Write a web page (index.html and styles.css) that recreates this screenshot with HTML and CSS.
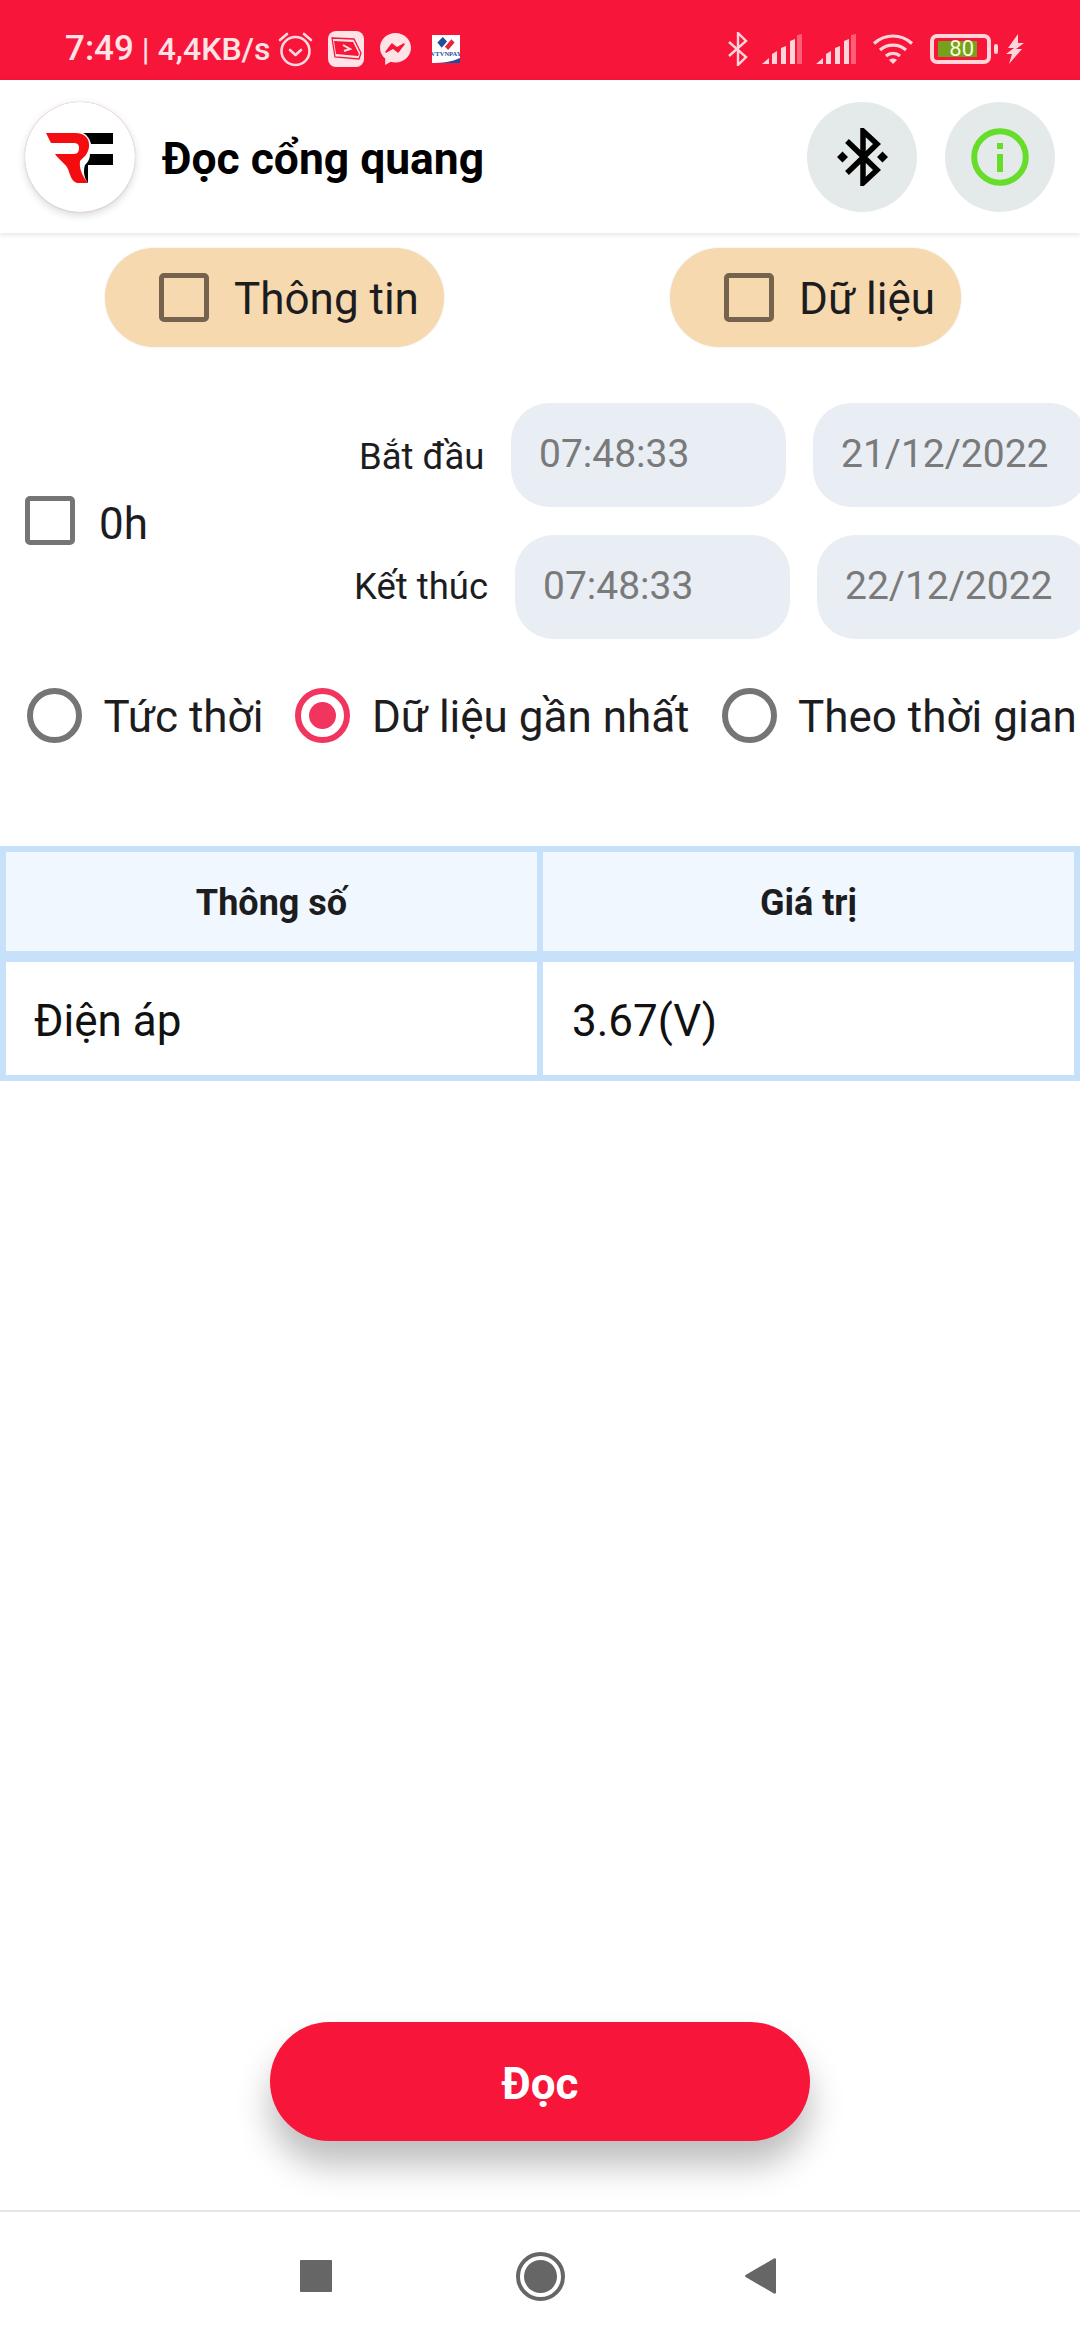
FILE: index.html
```html
<!DOCTYPE html>
<html lang="vi">
<head>
<meta charset="utf-8">
<title>Đọc cổng quang</title>
<link rel="stylesheet" href="styles.css">
</head>
<body>
<div class="page">
  <header class="status">
    <span class="status-text"><span class="status-time">7:49</span> <span class="status-sep">|</span> 4,4KB/s</span>
    <svg class="ic-alarm" width="35" height="36" viewBox="0 0 35 36" fill="none" stroke="#FFD9DE" stroke-width="2.6" stroke-linecap="round" stroke-linejoin="round"><circle cx="17.5" cy="20" r="14"/><path d="M12 19l5.5 5 5.5-5"/><path d="M2 9l7-6M33 9l-7-6"/></svg>
    <svg class="ic-app" width="36" height="36" viewBox="0 0 36 36"><rect width="36" height="36" rx="8" fill="#FFE3E6"/><path d="M4 7l22 1 7 14-2 6-24-2z" fill="none" stroke="#F71539" stroke-width="1.3"/><path d="M6 10l19 1 6 12-1 2-22-2z" fill="#F71539"/><path d="M15 14l7 4-6 2" fill="none" stroke="#FFE3E6" stroke-width="2"/></svg>
    <svg class="ic-msg" width="31" height="32" viewBox="0 0 31 32"><path d="M15.500 0C6.900 0 0 6.500 0 14.700c0 4.400 2 8.200 5.200 10.900V32l5.500-3.200c1.500.4 3.100.6 4.800.6 8.600 0 15.500-6.500 15.500-14.700S24.100 0 15.500 0z" fill="#FFE3E6"/><path d="M6 19l6-8 5 4 7-4-6 8-5-4z" fill="#F71539" stroke="#F71539" stroke-width="1.500" stroke-linejoin="round"/></svg>
    <span class="ic-pay">
      <svg class="pay-mark" width="20" height="14" viewBox="0 0 18 13"><path d="M1 6l5-5 4 4-5 6z" fill="#1E4E9C"/><path d="M8 10l6-7 3 3-6 7z" fill="#E0283A"/></svg>
      <span class="pay-name">VTVNPAY</span>
      <svg class="pay-wave" width="28" height="5" viewBox="0 0 28 5"><path d="M0 5c10 0 20-1 28-5v5z" fill="#1E4E9C"/></svg>
    </span>
    <div class="status-right">
      <svg class="ic-bt" width="20" height="34" viewBox="0 0 20 34" fill="none" stroke="#FFD5DB" stroke-width="2.400"><path d="M1 10l17 15-8 8V1l8 8L1 24"/></svg>
      <svg class="ic-sig" width="40" height="30" viewBox="0 0 40 30"><path d="M0 30l7-6v6zM10 20l5-3v13h-5zM19 14l5-2v18h-5zM28 7l5-2v25h-5z" fill="#FFD5DB"/><path d="M35 1l5-1v30h-5z" fill="#FF5F76"/></svg>
      <svg class="ic-sig ic-sig2" width="40" height="30" viewBox="0 0 40 30"><path d="M0 30l7-6v6zM10 20l5-3v13h-5zM19 14l5-2v18h-5zM28 7l5-2v25h-5z" fill="#FFD5DB"/><path d="M35 1l5-1v30h-5z" fill="#FF5F76"/></svg>
      <svg class="ic-wifi" width="42" height="30" viewBox="0 0 42 30" fill="none" stroke="#FFD5DB" stroke-width="3.200"><path d="M2 9.500c11-10 27-10 38 0"/><path d="M8 16c7.500-6.500 18.500-6.500 26 0"/><path d="M14 22c4-3.500 10-3.500 14 0"/><path d="M21 30l-4-4c2-2 6-2 8 0z" fill="#FFD5DB" stroke="none"/></svg>
      <span class="battery"><span class="battery-fill">80</span></span>
      <span class="battery-nub"></span>
      <svg class="ic-bolt" width="18" height="30" viewBox="0 0 18 30"><path d="M12 0L2 14h6l-8 6h6l-3 10 13-15h-6l8-6h-6z" fill="#FFD5DB"/></svg>
    </div>
  </header>

  <section class="appbar">
    <div class="logo">
      <svg width="110" height="110" viewBox="0 0 110 110">
        <path d="M58 31H88V42H66C65 37 62 33 58 31Z" fill="#000"/>
        <path d="M65 52H88V63H63V81C59 76 58 69 60 63C63 60 65 57 65 52Z" fill="#000"/>
        <path d="M21 31H50C60 31 65 37 64 45C63 52 59 55 55 59C54 66 57 74 63 81H52C46 79 45 72 43 67C41 62 35 59 30 52H49C53 52 54 49 54 46C54 42 52 41 48 41H26Z" fill="#F40C10"/>
      </svg>
    </div>
    <h1 class="title">Đọc cổng quang</h1>
    <div class="round-btn round-btn-first">
      <svg width="51" height="58" viewBox="0 0 51 58" fill="none"><path d="M10 13L40 42L26 55V3L40 16L10 45" stroke="#000" stroke-width="5.500"/><path d="M5.500 23.500L11 29L5.500 34.500L0 29zM45.500 23.500L51 29L45.500 34.500L40 29z" fill="#000"/></svg>
    </div>
    <div class="round-btn">
      <svg width="58" height="58" viewBox="0 0 58 58" fill="none"><circle cx="29" cy="29" r="25.800" stroke="#66DD2B" stroke-width="6"/><path d="M26 15h6v6h-6zM26 26h6v18h-6z" fill="#66DD2B"/></svg>
    </div>
  </section>

  <section class="chips">
    <div class="chip chip-info"><span class="box box-chip"></span><span class="label">Thông tin</span></div>
    <div class="chip chip-data"><span class="box box-chip"></span><span class="label">Dữ liệu</span></div>
  </section>

  <section class="dates">
    <div class="zero"><span class="box"></span><span class="label">0h</span></div>
    <div class="date-rows">
      <div class="date-row date-row-start">
        <span class="date-label">Bắt đầu</span>
        <span class="field">07:48:33</span>
        <span class="field">21/12/2022</span>
      </div>
      <div class="date-row date-row-end">
        <span class="date-label">Kết thúc</span>
        <span class="field">07:48:33</span>
        <span class="field">22/12/2022</span>
      </div>
    </div>
  </section>

  <section class="radios">
    <div class="radio-item"><span class="radio"></span><span class="label">Tức thời</span></div>
    <div class="radio-item"><span class="radio radio-on"></span><span class="label">Dữ liệu gần nhất</span></div>
    <div class="radio-item"><span class="radio"></span><span class="label">Theo thời gian</span></div>
  </section>

  <section class="table">
    <div class="cell cell-head">Thông số</div>
    <div class="cell cell-head">Giá trị</div>
    <div class="cell">Điện áp</div>
    <div class="cell">3.67(V)</div>
  </section>

  <main class="action"><button class="read-btn">Đọc</button></main>

  <footer class="nav">
    <span class="nav-square"></span>
    <span class="nav-home"><span class="nav-home-dot"></span></span>
    <svg class="nav-back" width="31" height="36" viewBox="0 0 31 36"><path d="M29 .500c1.200-.6 2 0 2 1.500v32c0 1.500-.8 2.100-2 1.500L1 19.200c-1.300-.7-1.300-1.700 0-2.400z" fill="#666"/></svg>
  </footer>
</div>
</body>
</html>
```
FILE: styles.css
```css
* { box-sizing: border-box; }
html, body { margin: 0; padding: 0; }
body { font-family: Roboto, "Noto Sans", sans-serif; background: #fff; color: #1d1d1f; }
.page { width: 1080px; height: 2340px; overflow: hidden; display: flex; flex-direction: column; background: #fff; }

/* status bar */
.status { height: 80px; flex: none; background: #F71539; display: flex; align-items: center; padding: 18px 0 0 65px; color: #FFE3E6; }
.status svg { display: block; flex: none; }
.status-text { font-size: 32px; font-weight: 500; white-space: nowrap; line-height: 36px; width: 205px; }
.status-time { font-size: 35px; }
.status-sep { font-weight: 400; }
.ic-alarm { margin-left: 8px; }
.ic-app { margin-left: 15px; }
.ic-msg { margin-left: 16px; }
.ic-pay { margin-left: 21px; width: 28px; height: 28px; background: #fff; display: flex; flex-direction: column; align-items: center; overflow: hidden; flex: none; }
.pay-mark { margin-top: 1px; }
.pay-name { font-size: 6.5px; line-height: 7px; color: #1E4E9C; font-weight: 700; font-family: "Liberation Serif", serif; white-space: nowrap; }
.pay-wave { margin-top: 1px; }
.status-right { margin-left: auto; display: flex; align-items: center; padding-right: 56px; }
.ic-sig { margin-left: 14px; }
.ic-wifi { margin-left: 16px; }
.battery { margin-left: 16px; width: 61px; height: 30px; border: 4px solid #FFD5DB; border-radius: 7px; padding: 3px 4px; display: flex; }
.battery-fill { width: 39px; background: #76A11C; color: #F4FBDD; font-size: 22px; line-height: 16px; text-align: right; padding-right: 3px; }
.battery-nub { margin-left: 3px; width: 4px; height: 10px; border-radius: 2px; background: #FFD5DB; }
.ic-bolt { margin-left: 8px; }

/* app bar */
.appbar { height: 153px; flex: none; display: flex; align-items: center; padding: 0 25px 0 25px; background: #fff; box-shadow: 0 2px 5px rgba(0,0,0,.1); position: relative; }
.logo { width: 110px; height: 110px; border-radius: 50%; background: #fff; box-shadow: 0 0 1px rgba(180,60,80,.6), 0 3px 9px rgba(0,0,0,.16); flex: none; }
.logo svg { display: block; }
.title { margin: 4px 0 0 27px; font-size: 44.4px; font-weight: 700; color: #000; flex: 1; white-space: nowrap; }
.round-btn { width: 110px; height: 110px; border-radius: 50%; background: #E4EAEA; display: flex; align-items: center; justify-content: center; flex: none; margin-left: 28px; }
.round-btn-first { margin-left: 0; }

/* checkboxes */
.label { font-size: 44px; line-height: 52px; white-space: nowrap; color: #1d1d1f; padding-top: 3px; }
.box { width: 50px; height: 49px; border: 5px solid #757575; border-radius: 5px; flex: none; display: block; }
.box-chip { border-color: #75634D; }

.chips { display: flex; padding: 15px 0 0 105px; flex: none; }
.chip { height: 99px; border-radius: 50px; background: #F6D9AE; display: flex; align-items: center; box-shadow: 0 0 2px rgba(0,0,0,.12); }
.chip-info { width: 339px; padding-left: 54px; }
.chip-data { width: 291px; margin-left: 226px; padding-left: 54px; }
.chip .label { margin-left: 25px; }

/* dates */
.dates { display: flex; align-items: center; margin-top: 55px; height: 237px; flex: none; }
.zero { display: flex; align-items: center; padding-left: 25px; width: 354px; flex: none; }
.zero .label { margin-left: 24px; padding-top: 6px; }
.date-rows { display: flex; flex-direction: column; gap: 28px; flex: none; }
.date-row { display: flex; align-items: center; height: 104px; }
.date-row-start { padding-left: 5px; }
.date-label { font-size: 36.5px; color: #1d1d1f; white-space: nowrap; width: 152px; flex: none; }
.date-row-start .date-label { padding-top: 3px; }
.date-row-end .date-label { width: 161px; }
.field { width: 275px; height: 104px; border-radius: 38px; background: #E9EDF4; color: #7A7A7A; font-size: 39px; display: flex; align-items: center; padding: 0 0 2px 28px; margin-right: 27px; flex: none; }

/* radios */
.radios { display: flex; align-items: center; height: 54px; margin-top: 49px; padding-left: 27px; gap: 32px; flex: none; }
.radio-item { display: flex; align-items: center; gap: 21.5px; }
.radio { width: 55px; height: 55px; border-radius: 50%; border: 6px solid #757575; display: flex; align-items: center; justify-content: center; flex: none; }
.radio-on { border-color: #F2355F; }
.radio-on::after { content: ""; width: 27px; height: 27px; border-radius: 50%; background: #F2355F; }

/* table */
.table { margin-top: 104px; display: grid; grid-template-columns: 531px 531px; grid-template-rows: 99px 113px; column-gap: 6px; row-gap: 11px; padding: 6px; background: #C8E1FB; flex: none; width: 1080px; }
.cell { background: #fff; display: flex; align-items: center; padding: 4px 0 0 29px; font-size: 44px; color: #111; }
.cell:nth-child(3) { padding-left: 28px; }
.cell-head { background: #F0F7FE; justify-content: center; padding: 3px 0 0; font-size: 36px; font-weight: 700; color: #1d1d1f; }

/* action */
.action { flex: 1; display: flex; align-items: flex-end; justify-content: center; padding-bottom: 69px; min-height: 0; }
.read-btn { width: 540px; height: 119px; border: 0; border-radius: 60px; background: #F71539; color: #fff; font-family: Roboto, sans-serif; font-size: 44px; font-weight: 700; box-shadow: 0 24px 34px rgba(0,0,0,.26); padding: 4px 0 0; }

/* nav */
.nav { height: 130px; flex: none; background: #fff; border-top: 2px solid #E6E6E6; display: flex; align-items: center; padding-left: 300px; position: relative; }
.nav-square { width: 32px; height: 32px; background: #666; border-radius: 1px; display: block; flex: none; }
.nav-home { margin-left: 184px; width: 49px; height: 49px; border-radius: 50%; border: 4px solid #666; display: flex; align-items: center; justify-content: center; flex: none; }
.nav-home-dot { width: 33px; height: 33px; border-radius: 50%; background: #666; display: block; }
.nav-back { margin-left: 180px; display: block; flex: none; }
```
